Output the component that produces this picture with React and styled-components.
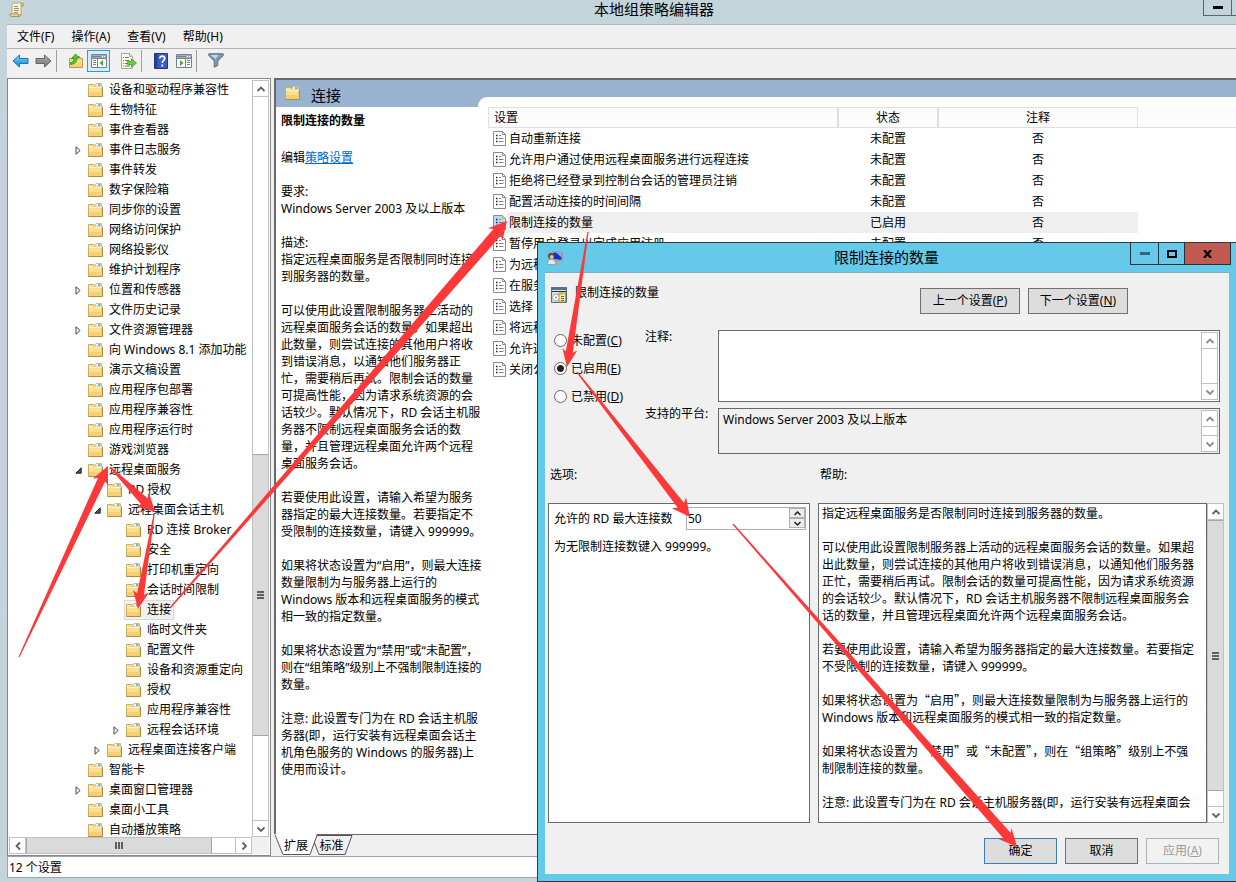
import React from "react";
import styled, { createGlobalStyle } from "styled-components";

const GlobalStyle = createGlobalStyle`
  *, *::before, *::after { box-sizing: border-box; }
  body {
    margin: 0;
    overflow: hidden;
    color: #000;
    font: 12px/17px "Noto Sans", "Noto Sans CJK SC", sans-serif;
  }
  button, input, textarea { font: inherit; color: inherit; margin: 0; padding: 0; border-radius: 0; }
  ul, p, h1, h2 { margin: 0; padding: 0; font-weight: normal; font-size: inherit; }
  svg { display: block; flex: none; }
`;

/* ---------- main window ---------- */

const Desktop = styled.div`
  position: relative;
  height: 100vh;
  overflow: hidden;
`;

const MainWindow = styled.div`
  height: 100%;
  display: flex;
  flex-direction: column;
  padding: 0 0 4px 7px;
  background: linear-gradient(#c3d5db 0, #c3d5db 110px, #c5cfe0 160px, #c5cfe0 520px, #c3d5db 620px);
`;

const TitleBar = styled.header`
  display: flex;
  flex: none;
  height: 25px;
  padding-left: 2px;
  background: #c3d5db;
  border-bottom: 1px solid #a9b8c2;
`;

const TitleIcon = styled.div`
  padding-top: 2px;
  width: 96px;
`;

const WindowTitle = styled.h1`
  flex: 1;
  font-size: 15px;
  line-height: 19px;
  text-align: center;
  white-space: nowrap;
`;

const MainControls = styled.div`
  display: flex;
  width: 33px;
  height: 16px;
  overflow: hidden;
`;

const MainControl = styled.button`
  flex: none;
  width: 29px;
  height: 16px;
  margin-right: -1px;
  background: none;
  border: 1px solid #5c646c;
  border-top: 0;
  display: flex;
  align-items: center;
  justify-content: center;
`;

const MenuBar = styled.nav`
  display: flex;
  flex: none;
  gap: 17px;
  height: 23px;
  padding-left: 10px;
  background: #f0f0f0;
`;

const MenuButton = styled.button`
  background: none;
  border: 0;
  white-space: nowrap;
`;

const Toolbar = styled.div`
  display: flex;
  flex: none;
  align-items: center;
  height: 30px;
  padding: 0 0 6px 2px;
  background: #f0f0f0;
  border-top: 1px solid #b4b4b4;
`;

const ToolButton = styled.button`
  display: flex;
  align-items: center;
  justify-content: center;
  width: 23px;
  height: 22px;
  margin-left: ${(p) => (p.$spaced ? 7 : 0)}px;
  border: 1px solid ${(p) => (p.$active ? "#26a0da" : "transparent")};
  background: ${(p) => (p.$active ? "#d8ecf7" : "none")};
`;

const Separator = styled.span`
  width: 1px;
  height: 22px;
  margin: 0 7px 0 1px;
  background: #a0a0a0;
`;

const Panes = styled.div`
  display: flex;
  flex: 1;
  min-height: 0;
  gap: 3px;
  background: #f0f0f0;
`;

/* ---------- scroll bars ---------- */

const ScrollBar = styled.div`
  display: flex;
  flex: none;
  flex-direction: ${(p) => (p.$horizontal ? "row" : "column")};
  ${(p) => (p.$horizontal ? "height: 17px;" : "width: 17px;")}
  background: #fff;
  border: 1px solid #c0c0c0;
`;

const ScrollButton = styled.button`
  display: flex;
  align-items: center;
  justify-content: center;
  flex: none;
  width: 15px;
  height: 15px;
  border: 0;
  background: #fff;
`;

const ScrollTrack = styled.div`
  display: flex;
  flex: 1;
  flex-direction: ${(p) => (p.$horizontal ? "row" : "column")};
  border: 0 solid #c0c0c0;
  border-width: ${(p) => (p.$horizontal ? "0 1px" : "1px 0")};
`;

const ScrollSpace = styled.div`
  flex: ${(p) => p.$size} 0 0;
`;

const ScrollThumb = styled.div`
  display: flex;
  align-items: center;
  justify-content: center;
  flex: ${(p) => p.$size} 0 0;
  background: #dadada;
  border: 0 solid #a6a6a6;
  border-width: ${(p) => (p.$horizontal ? "0 1px" : "1px 0")};
`;

const chevrons = {
  up: "M1.5 7 5 3.500 8.500 7",
  down: "M1.5 3.500 5 7 8.500 3.500",
  left: "M7 1.500 3.500 5 7 8.500",
  right: "M3.500 1.500 7 5 3.500 8.500",
};

function Chevron({ dir, color = "#606060" }) {
  return (
    <svg width="10" height="10" viewBox="0 0 10 10" fill="none" stroke={color} strokeWidth="1.8">
      <path d={chevrons[dir]} />
    </svg>
  );
}

function Grip({ horizontal }) {
  return (
    <svg width="8" height="8" viewBox="0 0 8 8" fill="none" stroke="#606060" strokeWidth="2">
      <path d={horizontal ? "M1 0v7M4 0v7M7 0v7" : "M0 1h7M0 4h7M0 7h7"} />
    </svg>
  );
}

function Scroll({ horizontal, before, thumb, after, arrow }) {
  return (
    <ScrollBar $horizontal={horizontal}>
      <ScrollButton tabIndex={-1} aria-label={horizontal ? "向左滚动" : "向上滚动"}>
        <Chevron dir={horizontal ? "left" : "up"} color={arrow} />
      </ScrollButton>
      <ScrollTrack $horizontal={horizontal}>
        {thumb && (
          <>
            <ScrollSpace $size={before} />
            <ScrollThumb $size={thumb} $horizontal={horizontal}>
              <Grip horizontal={horizontal} />
            </ScrollThumb>
            <ScrollSpace $size={after} />
          </>
        )}
      </ScrollTrack>
      <ScrollButton tabIndex={-1} aria-label={horizontal ? "向右滚动" : "向下滚动"}>
        <Chevron dir={horizontal ? "right" : "down"} color={arrow} />
      </ScrollButton>
    </ScrollBar>
  );
}

/* ---------- tree ---------- */

const TreePane = styled.aside`
  display: flex;
  flex-direction: column;
  flex: none;
  width: 264px;
  padding: 1px;
  border: 1px solid #828790;
  background: #fff;
`;

const TreeMain = styled.div`
  display: flex;
  flex: 1;
  min-height: 0;
`;

const TreeList = styled.ul`
  flex: 1;
  min-width: 0;
  overflow: hidden;
  list-style: none;
`;

const TreeRow = styled.li`
  display: flex;
  align-items: center;
  height: 20px;
  padding-left: ${(p) => 63 + p.$level * 19}px;
  white-space: nowrap;
`;

const Expander = styled.span`
  flex: none;
  width: 14px;
  padding-left: 3px;
`;

const TreeItem = styled.span`
  display: flex;
  align-items: center;
  gap: 6px;
  height: 20px;
  padding: 0 2px 1px 1px;
  border: 1px solid ${(p) => (p.$selected ? "#d9d9d9" : "transparent")};
  background: ${(p) => (p.$selected ? "#f0f0f0" : "none")};
`;

const TreeFoot = styled.div`
  display: flex;
  flex-direction: column;
  padding-right: 17px;
  background: #f0f0f0;
`;

const treeItems = [
  [0, "设备和驱动程序兼容性"],
  [0, "生物特征"],
  [0, "事件查看器"],
  [0, "事件日志服务", "closed"],
  [0, "事件转发"],
  [0, "数字保险箱"],
  [0, "同步你的设置"],
  [0, "网络访问保护"],
  [0, "网络投影仪"],
  [0, "维护计划程序"],
  [0, "位置和传感器", "closed"],
  [0, "文件历史记录"],
  [0, "文件资源管理器", "closed"],
  [0, "向 Windows 8.1 添加功能"],
  [0, "演示文稿设置"],
  [0, "应用程序包部署"],
  [0, "应用程序兼容性"],
  [0, "应用程序运行时"],
  [0, "游戏浏览器"],
  [0, "远程桌面服务", "open"],
  [1, "RD 授权"],
  [1, "远程桌面会话主机", "open"],
  [2, "RD 连接 Broker"],
  [2, "安全"],
  [2, "打印机重定向"],
  [2, "会话时间限制"],
  [2, "连接", "selected"],
  [2, "临时文件夹"],
  [2, "配置文件"],
  [2, "设备和资源重定向"],
  [2, "授权"],
  [2, "应用程序兼容性"],
  [2, "远程会话环境", "closed"],
  [1, "远程桌面连接客户端", "closed"],
  [0, "智能卡"],
  [0, "桌面窗口管理器", "closed"],
  [0, "桌面小工具"],
  [0, "自动播放策略"],
];

/* ---------- icons ---------- */

function FolderIcon() {
  return (
    <svg width="15" height="14" viewBox="0 0 15 14">
      <path d="M.5 13.500v-12h5.500l1 1.500h7v10.500z" fill="#fbdf90" stroke="#cfab5c" />
      <path d="M6.500 3.500 8 .5h5.500v3.500h-7z" fill="#faf3d8" stroke="#d3bc80" />
      <path d="M10 2h2.500" stroke="#4f97ea" strokeWidth="1.500" />
      <path d="M1.500 5V2.500M1 4.500h13" stroke="#fff1c0" />
      <path d="M1 9h13v4H1z" fill="#f4cf74" />
      <path d="M.5 13.500h14V4" fill="none" stroke="#b18d42" />
    </svg>
  );
}

function ExpanderIcon({ state }) {
  return state === "open" ? (
    <svg width="7" height="7" viewBox="0 0 7 7">
      <path d="M6.200.8v5.400H.8z" fill="#555" stroke="#222" />
    </svg>
  ) : (
    <svg width="7" height="9" viewBox="0 0 7 9">
      <path d="M1 .8v7.400L5.200 4.500z" fill="#fff" stroke="#444" />
    </svg>
  );
}

function ScrollPaperIcon() {
  return (
    <svg width="16" height="16" viewBox="0 0 16 16">
      <path d="M4 1h9c2 0 2 3 .5 3H12v8.500H3V2.500z" fill="#fbf3d2" stroke="#b9a56c" strokeWidth=".9" />
      <path d="M12 4V2.500C12 1 14.500 1 14.500 2.500S14 4 12 4z" fill="#e2cd86" stroke="#9d8a52" strokeWidth=".8" />
      <path d="M1 12h8.500c-.6 1 0 2.500 1 2.500H2.500C.8 14.500.8 13 1 12zM10 14.500c1.500 0 2-1 2-2.500" fill="#e9d690" stroke="#a08e58" strokeWidth=".9" />
      <path d="M5 4.500h4M5 6.500h5M5 8.500h5M5 10.500h4" stroke="#80838e" strokeWidth=".9" />
    </svg>
  );
}

function ArrowIcon({ forward }) {
  const id = forward ? "fwd" : "back";
  return (
    <svg width="17" height="14" viewBox="0 0 17 14">
      <defs>
        <linearGradient id={id} x2="0" y2="1">
          <stop offset="0" stopColor={forward ? "#b5b5b5" : "#8fd6f8"} />
          <stop offset=".5" stopColor={forward ? "#8f8f8f" : "#3fb0ea"} />
          <stop offset="1" stopColor={forward ? "#777" : "#1676c4"} />
        </linearGradient>
      </defs>
      <path
        d={forward ? "M16 7 9.500 1v3.500H1v5h8.500V13z" : "M1 7l6.500-6v3.500H16v5H7.500V13z"}
        fill={`url(#${id})`}
        stroke={forward ? "#666" : "#1b75bb"}
      />
    </svg>
  );
}

function FolderUpIcon() {
  return (
    <svg width="16" height="16" viewBox="0 0 16 16">
      <path d="M1.500 14.500v-9h4l1-2h5l1 2h2v9z" fill="#f5d27c" stroke="#c09a4c" />
      <path d="M2 8h12" stroke="#fbe7ae" />
      <path d="M2.500 9.500C4.500 9.500 6 8 6 5.500H3.500L7.500 1l4 4H9c0 3.500-2 6-6.500 6.500z" fill="#54c72f" stroke="#2b8f1c" strokeWidth=".8" />
    </svg>
  );
}

function PanelIcon({ flip }) {
  return (
    <svg width="16" height="14" viewBox="0 0 16 14">
      <path d="M.5.5h15v13H.5z" fill="#fff" stroke="#768091" />
      <path d="M1 1h14v3H1z" fill="#a4adba" />
      <path d="M1 2.500h9" stroke="#768091" />
      <path d="M11 2.500h1M13 2.500h1" stroke="#fff" />
      {flip ? (
        <>
          <path d="M1 4.500h14M9.500 5v8" stroke="#768091" />
          <path d="M11 6.500h3M11 8.500h3M11 10.500h3" stroke="#768091" />
          <path d="m4 6 3.500 3L4 12z" fill="#3fae2a" />
        </>
      ) : (
        <>
          <path d="M1 4.500h14M6.500 5v8" stroke="#768091" />
          <path d="M2 6.500h3M2 8.500h3M2 10.500h3" stroke="#768091" />
          <path d="M12 6 8.500 9l3.500 3z" fill="#3fae2a" />
        </>
      )}
    </svg>
  );
}

function ExportIcon() {
  return (
    <svg width="17" height="16" viewBox="0 0 17 16">
      <path d="M1.500.5h8l3 3v12h-11z" fill="#fffbe6" stroke="#a8a898" />
      <path d="M9.500.5v3h3" fill="none" stroke="#a8a898" />
      <path d="M3 4.500h1m1 0h4M3 7.500h1m1 0h4M3 10.500h1m1 0h2M3 13h1m1 0h5" stroke="#6f7480" />
      <path d="M7.500 8.500h4V6l5 4-5 4v-2.500h-4z" fill="#62cf3c" stroke="#379a25" strokeWidth=".8" />
    </svg>
  );
}

function HelpIcon() {
  return (
    <svg width="14" height="16" viewBox="0 0 14 16">
      <path d="M.5.5h13v15H.5z" fill="#3a5bcd" stroke="#23367f" />
      <path d="M1 1h2.500v14H1z" fill="#27408f" />
      <path d="M5.800 5.500c0-3.200 4.900-3 4.900 0 0 2-2.400 2-2.400 4.500M8.300 11.500v2" fill="none" stroke="#fff" strokeWidth="1.700" />
    </svg>
  );
}

function FilterIcon() {
  return (
    <svg width="16" height="15" viewBox="0 0 16 15">
      <path d="M.8.8h14.400v1.700L9.800 8v4.500l-3.600 1.700V8L.8 2.500z" fill="#7f99ac" stroke="#5b7183" />
      <path d="M2.500 2h8l-3 4z" fill="#c6d6e1" />
    </svg>
  );
}

function PolicyIcon({ selected }) {
  return (
    <svg width="13" height="15" viewBox="0 0 13 15">
      <path d="M.5.5h9l3 3v11H.5z" fill={selected ? "#b9d9f7" : "#fff"} stroke={selected ? "#6e93bd" : "#8a8a8a"} />
      <path d="M9.500.5v3h3" fill={selected ? "#f4e04c" : "none"} stroke={selected ? "#c3b640" : "#8a8a8a"} />
      <path d="M3 4.500h1.500M3 7.500h1.500M3 10.500h1.500" stroke="#222" strokeWidth="1.500" />
      <path d="M6 4.500h2M6 7.500h4.500M6 10.500h4.500" stroke="#7a8088" />
    </svg>
  );
}

function RemoteIcon() {
  return (
    <svg width="17" height="16" viewBox="0 0 17 16">
      <path d="M5 1.500 15.500 2v9L5 10z" fill="#c9ccd2" stroke="#8d9099" strokeWidth=".8" />
      <path d="M6 2.500 14.500 3v7L6 9z" fill="#1232c4" />
      <path d="m9.500 3 5 .3v4z" fill="#86b2ff" />
      <path d="m9 11 3 .3v1.500l2 1.200-4 .8-2-1.300z" fill="#a9aba8" />
      <circle cx="4" cy="6" r="3" fill="#6d452c" />
      <circle cx="4.800" cy="7" r="2" fill="#eebf92" />
      <path d="M.5 14.500c0-3.500 1.500-5 4-5s4 1.500 4 5z" fill="#e3ecf5" stroke="#7d96ad" strokeWidth=".7" />
    </svg>
  );
}

function SettingIcon() {
  return (
    <svg width="16" height="16" viewBox="0 0 16 16">
      <path d="M.5.5h15v15H.5z" fill="#dfe2dc" stroke="#4f6f6b" />
      <path d="M0 0h16v3H0z" fill="#626a9b" />
      <path d="M1 1h2v2H1zM13 1h2v2h-2z" fill="#1f8876" />
      <path d="M1 4.500h14" stroke="#26332f" />
      <circle cx="5" cy="10.500" r="3.500" fill="#fff" stroke="#a0a7a5" />
      <circle cx="5" cy="10.500" r="1" fill="#7c8482" />
      <path d="M8 6h6.500v9H8z" fill="#f3e7ae" stroke="#9b8440" strokeWidth=".8" />
      <path d="M8 6h4v1.500H8z" fill="#e3a51f" />
      <path d="M10 9.500h3M10 11.500h3M10 13.500h3" stroke="#6a6a50" />
    </svg>
  );
}

/* ---------- right pane ---------- */

const ResultPane = styled.main`
  display: flex;
  flex-direction: column;
  flex: 1;
  min-width: 0;
  border-top: 2px solid #696969;
  border-left: 2px solid #696969;
  background: #fff;
`;

const PaneHeader = styled.div`
  display: flex;
  flex: none;
  height: 27px;
  background: #99b2d0;
`;

const PaneTitle = styled.h2`
  display: flex;
  gap: 11px;
  width: 202px;
  padding: 6px 0 0 9px;
  font-size: 15px;
  line-height: 19px;
`;

const PaneNotch = styled.div`
  flex: 1;
  margin-top: 17px;
  border-top-left-radius: 9px;
  background: #fff;
`;

const PaneBody = styled.div`
  display: flex;
  flex: 1;
  min-height: 0;
  overflow: hidden;
`;

const Description = styled.section`
  flex: none;
  width: 212px;
  padding: 5px 0 0 5px;
  white-space: nowrap;
`;

const Paragraph = styled.p`
  margin-bottom: 17px;
`;

const PolicyName = styled.h2`
  margin-bottom: 20px;
  font-weight: bold;
`;

const Link = styled.a`
  color: #0066cc;
  text-decoration: underline;
`;

const PolicyTable = styled.table`
  flex: 1;
  align-self: flex-start;
  width: 100%;
  table-layout: fixed;
  border-collapse: separate;
  border-spacing: 0;
  white-space: nowrap;
`;

const HeadCell = styled.th`
  height: 21px;
  padding: 0 0 0 ${(p) => (p.$first ? 5 : 0)}px;
  line-height: 19px;
  font-weight: normal;
  text-align: ${(p) => (p.$first ? "left" : "center")};
  background: #fcfcfc;
  border: solid #dfdfdf;
  border-width: ${(p) => (p.$rest ? "0 0 1px" : "1px")};
`;

const Cell = styled.td`
  height: 21px;
  padding: 0;
  overflow: hidden;
  text-align: center;
  background: ${(p) => (p.$selected ? "#efefef" : "none")};
`;

const NameCell = styled.div`
  display: flex;
  align-items: center;
  height: 21px;
  padding-left: 5px;
`;

const NameText = styled.span`
  flex: 1;
  margin-left: 1px;
  padding-left: 2px;
  line-height: 21px;
  text-align: left;
  background: ${(p) => (p.$selected ? "#efefef" : "none")};
`;

const policies = [
  ["自动重新连接", "未配置", "否"],
  ["允许用户通过使用远程桌面服务进行远程连接", "未配置", "否"],
  ["拒绝将已经登录到控制台会话的管理员注销", "未配置", "否"],
  ["配置活动连接的时间间隔", "未配置", "否"],
  ["限制连接的数量", "已启用", "否"],
  ["暂停用户登录以完成应用注册", "未配置", "否"],
  ["为远程"],
  ["在服务"],
  ["选择"],
  ["将远程"],
  ["允许远"],
  ["关闭公"],
];

const descriptionText = [
  ["要求:", "Windows Server 2003 及以上版本"],
  ["描述:", "指定远程桌面服务是否限制同时连接", "到服务器的数量。"],
  [
    "可以使用此设置限制服务器上活动的",
    "远程桌面服务会话的数量。如果超出",
    "此数量，则尝试连接的其他用户将收",
    "到错误消息，以通知他们服务器正",
    "忙，需要稍后再试。限制会话的数量",
    "可提高性能，因为请求系统资源的会",
    "话较少。默认情况下，RD 会话主机服",
    "务器不限制远程桌面服务会话的数",
    "量，并且管理远程桌面允许两个远程",
    "桌面服务会话。",
  ],
  ["若要使用此设置，请输入希望为服务", "器指定的最大连接数量。若要指定不", "受限制的连接数量，请键入 999999。"],
  ["如果将状态设置为“启用”，则最大连接", "数量限制为与服务器上运行的", "Windows 版本和远程桌面服务的模式", "相一致的指定数量。"],
  ["如果将状态设置为“禁用”或“未配置”，", "则在“组策略”级别上不强制限制连接的", "数量。"],
  ["注意: 此设置专门为在 RD 会话主机服", "务器(即，运行安装有远程桌面会话主", "机角色服务的 Windows 的服务器)上", "使用而设计。"],
];

const helpText = [
  ["指定远程桌面服务是否限制同时连接到服务器的数量。"],
  [
    "可以使用此设置限制服务器上活动的远程桌面服务会话的数量。如果超",
    "出此数量，则尝试连接的其他用户将收到错误消息，以通知他们服务器",
    "正忙，需要稍后再试。限制会话的数量可提高性能，因为请求系统资源",
    "的会话较少。默认情况下，RD 会话主机服务器不限制远程桌面服务会",
    "话的数量，并且管理远程桌面允许两个远程桌面服务会话。",
  ],
  ["若要使用此设置，请输入希望为服务器指定的最大连接数量。若要指定", "不受限制的连接数量，请键入 999999。"],
  ["如果将状态设置为“启用”，则最大连接数量限制为与服务器上运行的", "Windows 版本和远程桌面服务的模式相一致的指定数量。"],
  ["如果将状态设置为“禁用”或“未配置”，则在“组策略”级别上不强", "制限制连接的数量。"],
  ["注意: 此设置专门为在 RD 会话主机服务器(即，运行安装有远程桌面会"],
];

const WideQuote = styled.span`
  font-family: "Noto Sans CJK SC", sans-serif;
  line-height: 1;
`;

function Lines({ lines, wideQuotes }) {
  return (
    <Paragraph>
      {lines.map((line, i) => (
        <React.Fragment key={i}>
          {i > 0 && <br />}
          {wideQuotes
            ? line.split(/([“”])/).map((part, j) => (j % 2 ? <WideQuote key={j}>{part}</WideQuote> : part))
            : line}
        </React.Fragment>
      ))}
    </Paragraph>
  );
}

const TabStrip = styled.div`
  display: flex;
  flex: none;
  height: 22px;
  margin-left: -2px;
  background: #f0f0f0;
  border-top: 1px solid #696969;
`;

const TabButton = styled.button`
  width: ${(p) => (p.$active ? 39 : 37)}px;
  height: 20px;
  padding-left: ${(p) => (p.$active ? 5 : 0)}px;
  border: 0;
  background: none;
`;

const TabBack = styled.div`
  position: relative;
  isolation: isolate;
  display: flex;
`;

const TabShape = styled.svg`
  position: absolute;
  z-index: -1;
  left: 0;
  top: -1px;
`;

const StatusBar = styled.footer`
  flex: none;
  height: 22px;
  padding: 2px 0 0 1px;
  background: #fff;
  border: solid #a0a5aa;
  border-width: 1px 0 1px 1px;
`;

/* ---------- dialog ---------- */

const Dialog = styled.section`
  position: absolute;
  left: 537px;
  right: 0;
  top: 242px;
  padding: 0 7px 7px;
  background: #65caea;
  border: solid #2c3a42;
  border-width: 1px 0 1px 1px;
`;

const DialogBar = styled.header`
  display: flex;
  height: 29px;
  margin-right: -2px;
`;

const DialogIcon = styled.div`
  width: 98px;
  padding: 7px 0 0 2px;
`;

const DialogTitle = styled.h2`
  flex: 1;
  font-size: 15px;
  line-height: 29px;
  text-align: center;
`;

const DialogControls = styled.div`
  display: flex;
  width: 101px;
  height: 22px;
  border: 1px solid #20343d;
  border-top: 0;
`;

const DialogControl = styled.button`
  display: flex;
  align-items: center;
  justify-content: center;
  flex: ${(p) => (p.$close ? "1" : "none")};
  width: ${(p) => (p.$narrow ? 26 : 27)}px;
  border: 0;
  border-left: ${(p) => (p.$first ? "0" : "1px solid #20343d")};
  background: ${(p) => (p.$close ? "#c15a50" : "none")};
`;

const DialogBody = styled.div`
  background: #f0f0f0;
  border-top: 1px solid #8fa9b3;
`;

const DialogHead = styled.div`
  display: flex;
  align-items: flex-start;
  height: 57px;
  padding: 14px 101px 0 6px;
`;

const DialogName = styled.h2`
  flex: 1;
  padding-left: 8px;
  margin-top: -3px;
`;

const Button = styled.button`
  width: ${(p) => p.$width}px;
  height: 26px;
  padding-bottom: 1px;
  margin-left: 8px;
  background: #dddddd;
  border: 1px solid ${(p) => (p.$primary ? "#3c7fb1" : "#707070")};
  &:disabled {
    color: #9a9a9a;
    background: #f2f2f2;
    border-color: #adb2b5;
  }
`;

const HeadButtons = styled.div`
  display: flex;
  margin-top: 1px;
`;

const Form = styled.div`
  display: grid;
  grid-template-columns: 100px 73px 1fr;
  padding-right: 9px;
`;

const RadioGroup = styled.div`
  display: flex;
  flex-direction: column;
  gap: 11px;
  padding: 2px 0 0 9px;
`;

const RadioLabel = styled.label`
  display: flex;
  align-items: center;
  gap: 4px;
  white-space: nowrap;
`;

const Radio = styled.input`
  appearance: none;
  flex: none;
  width: 13px;
  height: 13px;
  border: 1px solid #666;
  border-radius: 50%;
  background: #fff;
  &:checked {
    background: radial-gradient(#222 0 3px, #fff 4px);
  }
`;

const FieldLabels = styled.div`
  display: flex;
  flex-direction: column;
  gap: 60px;
  margin-top: -2px;
  white-space: nowrap;
`;

const Fields = styled.div`
  display: flex;
  flex-direction: column;
  gap: 6px;
`;

const FieldBox = styled.div`
  display: flex;
  height: ${(p) => p.$height}px;
  padding: 1px;
  border: 1px solid #696969;
  background: ${(p) => (p.$readOnly ? "none" : "#fff")};
`;

const TextArea = styled.textarea`
  flex: 1;
  min-width: 0;
  padding: 1px 3px;
  border: 0;
  outline: 0;
  resize: none;
  overflow: hidden;
  background: none;
`;

const Captions = styled.div`
  display: grid;
  grid-template-columns: 270px 1fr;
  padding: 12px 0 20px 5px;
`;

const Boxes = styled.div`
  display: flex;
  gap: 8px;
  height: 320px;
  padding: 0 5px 0 3px;
`;

const OptionsBox = styled.div`
  flex: none;
  width: 262px;
  padding: 3px 3px 0 5px;
  background: #fff;
  border: 1px solid #696969;
`;

const OptionRow = styled.div`
  display: flex;
  align-items: center;
  gap: 10px;
  margin-bottom: 8px;
`;

const OptionLabel = styled.label`
  white-space: nowrap;
`;

const Spinner = styled.div`
  display: flex;
  flex: none;
  width: 120px;
  height: 23px;
  margin-left: auto;
  border: 1px solid #abadb3;
`;

const SpinInput = styled.input`
  flex: 1;
  min-width: 0;
  padding-left: 1px;
  border: 0;
  outline: 0;
`;

const SpinButtons = styled.div`
  display: flex;
  flex-direction: column;
  width: 16px;
  height: 20px;
`;

const SpinButton = styled.button`
  display: flex;
  align-items: center;
  justify-content: center;
  flex: 1;
  border: 1px solid #b0b0b0;
  background: #ececec;
`;

const HelpBox = styled.div`
  display: flex;
  flex: 1;
  min-width: 0;
`;

const HelpText = styled.div`
  flex: 1;
  min-width: 0;
  padding: 1px 0 0 3px;
  overflow: hidden;
  white-space: nowrap;
  background: #fff;
  border: 1px solid #696969;
`;

const DialogFooter = styled.div`
  display: flex;
  justify-content: flex-end;
  padding: 15px 10px 10px 0;
`;

/* ---------- annotation arrows ---------- */

const Annotations = styled.svg`
  position: absolute;
  left: 0;
  top: 0;
  pointer-events: none;
`;

const arrows = [
  { from: [19, 657], to: [108, 466], shaft: 8, head: 17 },
  { from: [110, 467], to: [155, 512], shaft: 9, head: 19 },
  { from: [154, 515], to: [138, 609], shaft: 7, head: 16 },
  { from: [170, 608], to: [507, 221], shaft: 10, head: 19 },
  { from: [588, 232], to: [567, 367], shaft: 7, head: 15 },
  { from: [577, 372], to: [690, 517], shaft: 8, head: 18 },
  { from: [733, 524], to: [1017, 847], shaft: 9, head: 17 },
];

function arrowPoints({ from, to, shaft, head }) {
  const dx = to[0] - from[0];
  const dy = to[1] - from[1];
  const length = Math.hypot(dx, dy);
  const [ux, uy] = [dx / length, dy / length];
  const at = (along, across) =>
    `${(from[0] + ux * along - uy * across).toFixed(1)},${(from[1] + uy * along + ux * across).toFixed(1)}`;
  return [
    at(0, -0.6),
    at(length - 15, -shaft / 2),
    at(length - 18, -head / 2),
    at(length, 0),
    at(length - 18, head / 2),
    at(length - 15, shaft / 2),
    at(0, 0.6),
  ].join(" ");
}

/* ---------- page ---------- */

export default function App() {
  return (
    <Desktop>
      <GlobalStyle />
      <MainWindow>
        <TitleBar>
          <TitleIcon>
            <ScrollPaperIcon />
          </TitleIcon>
          <WindowTitle>本地组策略编辑器</WindowTitle>
          <MainControls>
            <MainControl aria-label="最小化">
              <svg width="10" height="3">
                <path d="M0 0h10v3H0z" />
              </svg>
            </MainControl>
            <MainControl aria-label="最大化" />
          </MainControls>
        </TitleBar>
        <MenuBar>
          {["文件(F)", "操作(A)", "查看(V)", "帮助(H)"].map((name) => (
            <MenuButton key={name}>{name}</MenuButton>
          ))}
        </MenuBar>
        <Toolbar>
          <ToolButton aria-label="后退"><ArrowIcon /></ToolButton>
          <ToolButton aria-label="前进"><ArrowIcon forward /></ToolButton>
          <Separator />
          <ToolButton aria-label="上一级"><FolderUpIcon /></ToolButton>
          <ToolButton aria-label="显示控制台树" $active><PanelIcon /></ToolButton>
          <ToolButton aria-label="导出列表" $spaced><ExportIcon /></ToolButton>
          <Separator />
          <ToolButton aria-label="帮助"><HelpIcon /></ToolButton>
          <ToolButton aria-label="显示操作窗格"><PanelIcon flip /></ToolButton>
          <Separator />
          <ToolButton aria-label="筛选器"><FilterIcon /></ToolButton>
        </Toolbar>
        <Panes>
          <TreePane>
            <TreeMain>
              <TreeList>
                {treeItems.map(([level, name, state], i) => (
                  <TreeRow key={i} $level={level}>
                    <Expander>
                      {(state === "open" || state === "closed") && <ExpanderIcon state={state} />}
                    </Expander>
                    <TreeItem $selected={state === "selected"}>
                      <FolderIcon />
                      {name}
                    </TreeItem>
                  </TreeRow>
                ))}
              </TreeList>
              <Scroll before={358} thumb={282} after={84} />
            </TreeMain>
            <TreeFoot>
              <Scroll horizontal before={0} thumb={187} after={23} />
            </TreeFoot>
          </TreePane>
          <ResultPane>
            <PaneHeader>
              <PaneTitle>
                <FolderIcon />
                连接
              </PaneTitle>
              <PaneNotch />
            </PaneHeader>
            <PaneBody>
              <Description>
                <PolicyName>限制连接的数量</PolicyName>
                <Paragraph>
                  编辑<Link href="#policy">策略设置</Link>
                </Paragraph>
                {descriptionText.map((lines, i) => (
                  <Lines key={i} lines={lines} />
                ))}
              </Description>
              <PolicyTable>
                <colgroup>
                  <col width="350" />
                  <col width="100" />
                  <col width="200" />
                  <col />
                </colgroup>
                <thead>
                  <tr>
                    <HeadCell $first>设置</HeadCell>
                    <HeadCell>状态</HeadCell>
                    <HeadCell>注释</HeadCell>
                    <HeadCell $rest />
                  </tr>
                </thead>
                <tbody>
                  {policies.map(([name, status, comment]) => {
                    const selected = name === "限制连接的数量";
                    return (
                      <tr key={name}>
                        <Cell>
                          <NameCell>
                            <PolicyIcon selected={selected} />
                            <NameText $selected={selected}>{name}</NameText>
                          </NameCell>
                        </Cell>
                        <Cell $selected={selected}>{status}</Cell>
                        <Cell $selected={selected}>{comment}</Cell>
                        <Cell />
                      </tr>
                    );
                  })}
                </tbody>
              </PolicyTable>
            </PaneBody>
            <TabStrip>
              <TabBack>
                <TabShape width="82" height="22" viewBox="0 0 82 22">
                  <path d="M42 1.500h36L71 20H44l-5-10z" fill="#f0f0f0" />
                  <path d="M42 1.500h36L71 20.500H45L40.500 9" fill="none" stroke="#555" />
                  <path d="M0 0h43l-7 20H9z" fill="#fff" />
                  <path d="M1 1l8 19.500h27L43 1.500" fill="none" stroke="#555" />
                </TabShape>
                <TabButton $active>扩展</TabButton>
                <TabButton>标准</TabButton>
              </TabBack>
            </TabStrip>
          </ResultPane>
        </Panes>
        <StatusBar>12 个设置</StatusBar>
      </MainWindow>

      <Dialog role="dialog" aria-label="限制连接的数量">
        <DialogBar>
          <DialogIcon>
            <RemoteIcon />
          </DialogIcon>
          <DialogTitle>限制连接的数量</DialogTitle>
          <DialogControls>
            <DialogControl $first aria-label="最小化">
              <svg width="10" height="3"><path d="M0 0h10v3H0z" fill="#336678" /></svg>
            </DialogControl>
            <DialogControl $narrow aria-label="最大化">
              <svg width="10" height="8"><path d="M1 1h8v6H1z" fill="none" stroke="#000" strokeWidth="2" /></svg>
            </DialogControl>
            <DialogControl $close aria-label="关闭">
              <svg width="9" height="8"><path d="M1 0l7 8M8 0 1 8" stroke="#000" strokeWidth="2.200" /></svg>
            </DialogControl>
          </DialogControls>
        </DialogBar>
        <DialogBody>
          <DialogHead>
            <SettingIcon />
            <DialogName>限制连接的数量</DialogName>
            <HeadButtons>
              <Button $width={100}>上一个设置(<u>P</u>)</Button>
              <Button $width={100}>下一个设置(<u>N</u>)</Button>
            </HeadButtons>
          </DialogHead>
          <Form>
            <RadioGroup>
              <RadioLabel><Radio type="radio" name="state" /><span>未配置(<u>C</u>)</span></RadioLabel>
              <RadioLabel><Radio type="radio" name="state" defaultChecked /><span>已启用(<u>E</u>)</span></RadioLabel>
              <RadioLabel><Radio type="radio" name="state" /><span>已禁用(<u>D</u>)</span></RadioLabel>
            </RadioGroup>
            <FieldLabels>
              <label htmlFor="comment">注释:</label>
              <label htmlFor="platform">支持的平台:</label>
            </FieldLabels>
            <Fields>
              <FieldBox $height={72}>
                <TextArea id="comment" />
                <Scroll arrow="#8c8c8c" />
              </FieldBox>
              <FieldBox $height={46} $readOnly>
                <TextArea id="platform" readOnly defaultValue="Windows Server 2003 及以上版本" />
                <Scroll arrow="#8c8c8c" />
              </FieldBox>
            </Fields>
          </Form>
          <Captions>
            <span>选项:</span>
            <span>帮助:</span>
          </Captions>
          <Boxes>
            <OptionsBox>
              <OptionRow>
                <OptionLabel htmlFor="limit">允许的 RD 最大连接数</OptionLabel>
                <Spinner>
                  <SpinInput id="limit" defaultValue="50" />
                  <SpinButtons>
                    <SpinButton aria-label="增加">
                      <svg width="7" height="5" fill="none" stroke="#222" strokeWidth="1.500"><path d="M.5 4l3-3 3 3" /></svg>
                    </SpinButton>
                    <SpinButton aria-label="减少">
                      <svg width="7" height="5" fill="none" stroke="#222" strokeWidth="1.500"><path d="M.5 1l3 3 3-3" /></svg>
                    </SpinButton>
                  </SpinButtons>
                </Spinner>
              </OptionRow>
              <p>为无限制连接数键入 999999。</p>
            </OptionsBox>
            <HelpBox>
              <HelpText>
                {helpText.map((lines, i) => (
                  <Lines key={i} lines={lines} wideQuotes />
                ))}
              </HelpText>
              <Scroll before={0} thumb={272} after={15} />
            </HelpBox>
          </Boxes>
          <DialogFooter>
            <Button $width={73} $primary>确定</Button>
            <Button $width={73}>取消</Button>
            <Button $width={73} disabled>应用(<u>A</u>)</Button>
          </DialogFooter>
        </DialogBody>
      </Dialog>

      <Annotations width="1236" height="882" viewBox="0 0 1236 882" fill="#fd3838" aria-hidden="true">
        {arrows.map((arrow, i) => (
          <polygon key={i} points={arrowPoints(arrow)} />
        ))}
      </Annotations>
    </Desktop>
  );
}
